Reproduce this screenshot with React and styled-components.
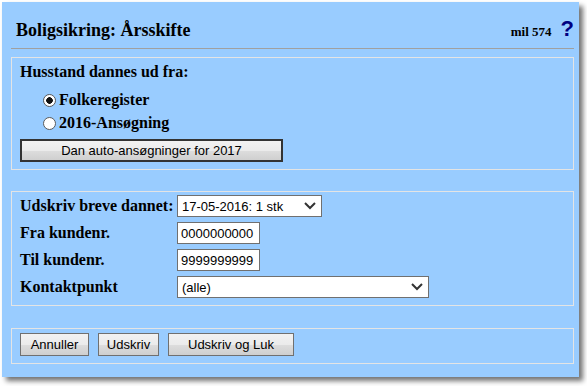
import React, { useState } from 'react';
import styled, { createGlobalStyle } from 'styled-components';

const GlobalStyle = createGlobalStyle`
  html, body {
    margin: 0;
    padding: 0;
    background: #ffffff;
  }
  body {
    font-family: "Liberation Serif", "Times New Roman", serif;
  }
`;

const Page = styled.div`
  padding: 2px 0 0 2px;
  width: 587px;
  height: 386px;
  box-sizing: border-box;
`;

const Dialog = styled.div`
  width: 577px;
  height: 375px;
  box-sizing: border-box;
  background: #99ccff;
  box-shadow: 4px 4px 5px rgba(0, 0, 0, 0.55);
  padding: 0 5px 0 9px;
  display: flex;
  flex-direction: column;
`;

const Header = styled.div`
  display: flex;
  align-items: baseline;
  justify-content: space-between;
  height: 47px;
  box-sizing: border-box;
  padding: 14px 0 0 5px;
  border-bottom: 1px solid #a0a0a0;
`;

const Title = styled.h1`
  margin: 0;
  font-size: 18px;
  font-weight: bold;
  color: #000;
`;

const Meta = styled.div`
  display: flex;
  align-items: baseline;
  gap: 9px;
  font-size: 13px;
  font-weight: bold;
`;

const Help = styled.span`
  font-family: "Liberation Sans", Arial, sans-serif;
  font-size: 22px;
  font-weight: bold;
  color: #000080;
`;

const Section = styled.div`
  border: 1px solid #e4e4e4;
  padding: ${(p) => p.$pad};
  margin-top: ${(p) => p.$top}px;
  display: flex;
  flex-direction: column;
`;

const Heading = styled.div`
  font-size: 16px;
  font-weight: bold;
  line-height: 20px;
`;

const RadioList = styled.div`
  display: flex;
  flex-direction: column;
  gap: 3px;
  padding: 8px 0 0 22px;
`;

const RadioRow = styled.label`
  display: flex;
  align-items: center;
  font-size: 16px;
  font-weight: bold;
  height: 20px;
`;

const Radio = styled.input.attrs({ type: 'radio' })`
  appearance: none;
  margin: 0 3px 0 1px;
  width: 13px;
  height: 13px;
  box-sizing: border-box;
  border: 1px solid #5a5a5a;
  border-radius: 50%;
  background: #fff;

  &:checked {
    background: radial-gradient(circle, #111 0 3px, #fff 3.6px);
  }
`;

const ButtonWrap = styled.div`
  margin-top: 6px;
`;

const Button = styled.button`
  font-family: "Liberation Sans", Arial, sans-serif;
  font-size: 13px;
  color: #000;
  height: 23px;
  width: ${(p) => p.$w}px;
  padding: 0;
  border: ${(p) => (p.$primary ? '2px solid #333' : '1px solid #707070')};
  border-radius: 0;
  background: linear-gradient(#f2f2f2 0%, #ebebeb 50%, #dddddd 51%, #cfcfcf 100%);
  cursor: pointer;
`;

const Grid = styled.div`
  display: grid;
  grid-template-columns: 157px auto;
  grid-auto-rows: 22px;
  row-gap: 5px;
  align-items: center;
`;

const Label = styled.div`
  font-size: 16px;
  font-weight: bold;
`;

const SelectBox = styled.div`
  position: relative;
  width: ${(p) => p.$w}px;
  height: 22px;
`;

const Select = styled.select`
  appearance: none;
  width: 100%;
  height: 100%;
  box-sizing: border-box;
  border: 1px solid #707070;
  border-radius: 0;
  background: #fff;
  font-family: "Liberation Sans", Arial, sans-serif;
  font-size: 13px;
  color: #000;
  padding: 0 24px 0 4px;
  outline: none;
`;

const Chevron = styled.svg`
  position: absolute;
  right: 6px;
  top: 6px;
  pointer-events: none;
`;

const Input = styled.input`
  width: 83px;
  height: 22px;
  box-sizing: border-box;
  border: 1px solid #707070;
  border-radius: 0;
  font-family: "Liberation Sans", Arial, sans-serif;
  font-size: 13px;
  padding: 0 3px;
  outline: none;
`;

const Buttons = styled.div`
  display: flex;
  gap: 9px;
`;

const Dropdown = ({ w, value, options }) => (
  <SelectBox $w={w}>
    <Select defaultValue={value}>
      {options.map((o) => (
        <option key={o}>{o}</option>
      ))}
    </Select>
    <Chevron width="12" height="9" viewBox="0 0 12 9">
      <path d="M1 2 L6 7 L11 2" fill="none" stroke="#333" strokeWidth="2" />
    </Chevron>
  </SelectBox>
);

const App = () => {
  const [source, setSource] = useState('folk');
  return (
    <>
      <GlobalStyle />
      <Page>
        <Dialog>
          <Header>
            <Title>Boligsikring: Årsskifte</Title>
            <Meta>
              mil 574
              <Help>?</Help>
            </Meta>
          </Header>

          <Section $top={8} $pad="4px 8px 7px 8px">
            <Heading>Husstand dannes ud fra:</Heading>
            <RadioList>
              <RadioRow>
                <Radio name="src" checked={source === 'folk'} onChange={() => setSource('folk')} />
                Folkeregister
              </RadioRow>
              <RadioRow>
                <Radio name="src" checked={source === 'ans'} onChange={() => setSource('ans')} />
                2016-Ansøgning
              </RadioRow>
            </RadioList>
            <ButtonWrap>
              <Button $w={263} $primary>
                Dan auto-ansøgninger for 2017
              </Button>
            </ButtonWrap>
          </Section>

          <Section $top={21} $pad="3px 8px 7px 8px">
            <Grid>
              <Label>Udskriv breve dannet:</Label>
              <Dropdown w={145} value="17-05-2016: 1 stk" options={['17-05-2016: 1 stk']} />
              <Label>Fra kundenr.</Label>
              <Input defaultValue="0000000000" />
              <Label>Til kundenr.</Label>
              <Input defaultValue="9999999999" />
              <Label>Kontaktpunkt</Label>
              <Dropdown w={252} value="(alle)" options={['(alle)']} />
            </Grid>
          </Section>

          <Section $top={22} $pad="4px 8px 7px 8px">
            <Buttons>
              <Button $w={69}>Annuller</Button>
              <Button $w={61}>Udskriv</Button>
              <Button $w={126}>Udskriv og Luk</Button>
            </Buttons>
          </Section>
        </Dialog>
      </Page>
    </>
  );
};

export default App;
